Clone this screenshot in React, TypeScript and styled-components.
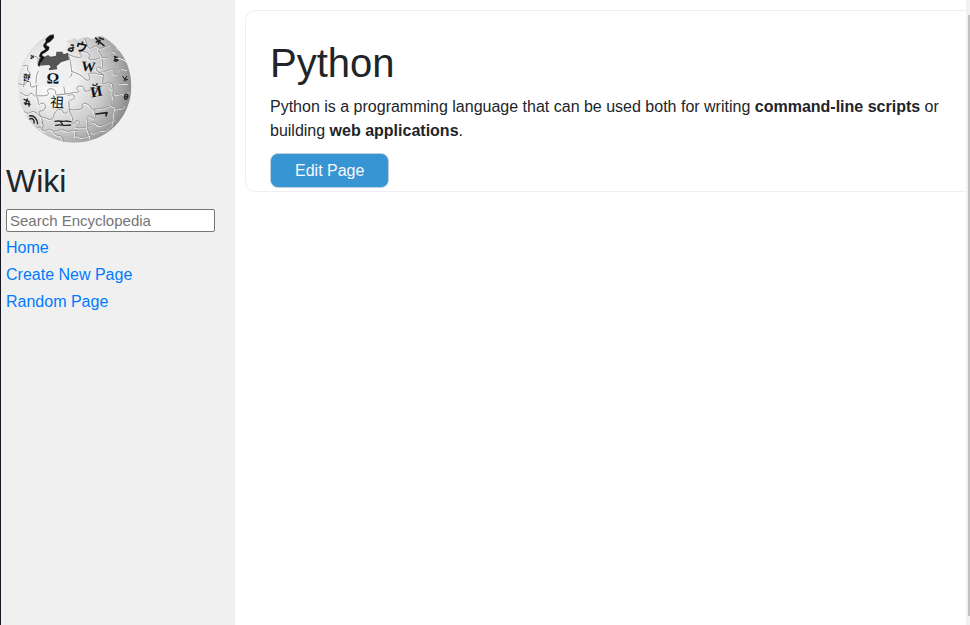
import React from 'react';
import styled, { createGlobalStyle } from 'styled-components';

const GlobalStyle = createGlobalStyle`
  *, *::before, *::after { box-sizing: border-box; }
  body {
    margin: 0;
    background: #fff;
    color: #212529;
    font: 16px/24px "Liberation Sans", Arial, sans-serif;
  }
`;

const Page = styled.div`
  display: grid;
  grid-template-columns: 235px minmax(0, 1fr) 4px;
  min-height: 100vh;
`;

const Sidebar = styled.aside`
  display: flex;
  flex-direction: column;
  align-items: flex-start;
  padding: 25px 5px;
  border-left: 1px solid #15161f;
  background: #f0f0f0;
`;

const Logo = styled.svg`
  display: block;
  width: 130px;
  height: 125px;
  margin-left: 4px;
`;

const SiteTitle = styled.h2`
  margin: 12px 0 8px;
  font-size: 32px;
  line-height: 38px;
  font-weight: 400;
`;

const SearchForm = styled.form`
  margin: 1px 0 4px;
`;

const SearchInput = styled.input`
  display: block;
  width: 209px;
  height: 23px;
  padding: 1px 3px;
  border: 1px solid #767676;
  border-radius: 2px;
  background: #fff;
  font: 15px "Liberation Sans", Arial, sans-serif;
  &::placeholder { color: #757575; }
`;

const Nav = styled.nav`
  display: flex;
  flex-direction: column;
  gap: 3px;
`;

const NavLink = styled.a`
  color: #007bff;
  text-decoration: none;
`;

const Main = styled.main`
  padding: 10px 0 0 10px;
`;

const Card = styled.article`
  padding: 28px 24px 3px;
  border: 1px solid #efefef;
  border-right: 0;
  border-radius: 10px 0 0 10px;
`;

const Title = styled.h1`
  margin: 0 0 8px;
  font-size: 40px;
  line-height: 48px;
  font-weight: 400;
`;

const Text = styled.p`
  margin: 0 0 10px;
`;

const EditButton = styled.button`
  display: block;
  height: 35px;
  padding: 0 24px;
  border: 1px solid #bdd0df;
  border-radius: 8px;
  background: #3895d3;
  color: #f8f9fa;
  font: 16px/24px "Liberation Sans", Arial, sans-serif;
`;

const ScrollTrack = styled.div`
  padding: 15px 0 9px 2px;
  display: flex;
  background: #f1f1f1;
`;

const ScrollThumb = styled.div`
  flex: 1;
  background: #c1c1c1;
`;

const seams = [
  'M62 95 C75 92 86 95 84 106 C80 120 97 125 87 136 C77 148 80 160 78 174',
  'M38 122 C49 124 55 117 53 128 C48 140 63 139 60 151 C58 162 47 158 43 170 L40 185',
  'M27 176 C37 181 45 181 49 173 C54 164 64 171 61 181 C59 188 70 187 82 182',
  'M82 181 C94 177 105 184 108 176 C110 164 127 168 121 179 C117 187 130 184 154 181 C165 181 164 174 160 167 C149 154 166 144 170 152 C179 164 188 151 185 139 C183 118 178 98 175 88',
  'M175 88 C196 98 216 102 214 92 C201 82 216 76 230 82 C246 88 232 99 238 103 C249 108 263 100 276 97',
  'M222 40 C236 57 225 64 241 71 C252 63 263 61 267 70 C260 81 275 86 276 98 C275 111 281 126 274 131 C263 120 253 132 263 140 C276 147 281 143 279 159 L276 177',
  'M185 139 C201 146 218 151 225 164 C241 170 240 158 236 151 C232 145 245 141 263 147 L279 149',
  'M267 70 C281 71 287 64 299 61 C312 59 304 50 315 53 C325 56 318 65 326 73',
  'M277 97 C293 101 302 93 302 83 C311 74 322 83 317 92 C323 99 341 98 351 108',
  'M279 141 C296 135 310 129 313 137 C302 147 314 154 325 146 C333 137 327 130 341 132 L351 134',
  'M154 181 C166 184 161 192 165 205 C176 218 187 202 192 213 C196 226 182 222 176 230 L178 255',
  'M165 207 C184 206 189 202 200 202 C210 202 206 195 199 191 C203 179 223 182 222 191 C217 202 235 200 247 192 C262 191 277 187 279 177',
  'M279 177 C292 174 305 169 307 181 C295 187 302 198 314 192 C324 184 321 174 333 175 L354 176',
  'M307 178 C313 194 305 208 310 219 C318 233 303 225 302 237 C304 249 315 238 317 254 C310 272 316 282 308 302',
  'M178 254 C196 256 209 255 217 249 C211 235 225 231 236 240 C247 247 237 253 252 253 C275 251 294 247 309 240',
  'M31 203 C41 207 47 217 57 209 C65 197 72 215 79 218 C90 225 80 235 88 239 C98 228 110 239 105 250 C98 263 85 254 87 264 C93 276 96 281 98 294',
  'M79 181 C81 195 75 209 80 218',
  'M80 213 C96 211 112 216 116 205 C106 194 119 188 130 193 C143 198 132 207 140 210 L165 207',
  'M43 260 C54 270 60 262 66 260 C80 257 84 275 95 276 C112 278 118 288 126 281 C134 273 129 270 134 264 C143 249 159 252 159 263 C169 269 179 255 178 254',
  'M178 254 C180 270 188 273 188 285 C178 295 190 301 198 288 C211 284 211 298 201 304 C194 311 199 323 196 336',
  'M77 312 C83 301 93 307 96 313 C105 323 115 311 122 314 C136 326 148 310 160 315 C178 323 187 315 201 316',
  'M95 291 L100 302 L94 314 M130 322 C137 337 150 325 158 339 L160 350',
  'M198 308 C215 311 225 307 239 303 C240 291 255 289 263 301 C276 305 290 296 317 284',
  'M253 253 C249 262 260 270 254 279 C241 283 246 272 235 274 C224 282 237 290 232 301 C229 316 240 321 241 340',
  'M317 254 C333 247 342 254 348 242 M315 207 C326 213 335 201 344 209 L361 200',
  'M246 324 C257 330 268 313 281 317 C292 320 298 310 303 304 M196 334 C208 328 213 343 221 337 L244 330',
];

const glyphs = [
  { char: 'W', x: 234, y: 139, size: 42, turn: 6, weight: 700 },
  { char: 'Ω', x: 128, y: 176, size: 47, turn: 1, weight: 700 },
  { char: 'Й', x: 262, y: 214, size: 45, turn: -11, weight: 700 },
  { char: '祖', x: 141, y: 247, size: 42, turn: 3, weight: 400 },
  { char: 'ウ', x: 212, y: 79, size: 36, turn: 12, weight: 700 },
  { char: '한', x: 48, y: 167, size: 25, turn: 10, weight: 700 },
];

function Globe() {
  return (
    <Logo viewBox="0 0 390 375" role="img" aria-label="Puzzle globe">
      <defs>
        <radialGradient id="sphere" cx="125" cy="160" r="265" gradientUnits="userSpaceOnUse">
          <stop offset="0" stopColor="#fff" />
          <stop offset=".3" stopColor="#eee" />
          <stop offset=".58" stopColor="#cecece" />
          <stop offset=".82" stopColor="#a1a1a1" />
          <stop offset="1" stopColor="#727272" />
        </radialGradient>
        <clipPath id="ball">
          <path d="M122 29 C73 50 25 109 25 188 C25 280 101 353 195 353 C289 353 364 278 364 184 C364 117 330 65 280 35 L269 33 L259 36 L247 43 L234 37 L219 38 L200 45 L194 38 L181 44 L168 48 L177 60 L166 72 L175 88 L178 116 L155 118 L142 134 L119 132 L117 121 L88 124 L94 95 L111 73 L107 55 L130 42 Z M88 124 L178 106 L178 185 L82 185 Z" />
        </clipPath>
      </defs>
      <g clipPath="url(#ball)">
        <rect width="390" height="375" fill="url(#sphere)" />
        <g fill="none" strokeLinecap="round" strokeLinejoin="round">
          {seams.map((d) => (
            <g key={d}>
              <path d={d} stroke="#fff" strokeWidth="3" transform="translate(-2 2)" />
              <path d={d} stroke="#949494" strokeWidth="3" />
            </g>
          ))}
        </g>
      </g>
      <path d="M88 98 L98 98 L114 90 L122 95 L138 92 L139 80 L157 80 L161 88 L174 83 L177 104 L153 112 L147 118 L140 124 L142 133 L118 136 L116 131 L122 126 L117 120 L87 122 Z" fill="#555" />
      <path d="M121 30 C76 51 26 107 25 185" fill="none" stroke="#d4d4d4" strokeWidth="2" />
      <path d="M108 42 L119 32 L130 29 L131 38 L120 50 L112 53 L107 61 L117 66 L116 74 L104 83 L96 86 L96 93 L103 96 L97 106 L90 113 L87 124 L84 120 L88 107 L94 99 L88 94 L93 82 L108 73 L102 66 L101 59 L108 51 Z" fill="#111" stroke="#111" strokeWidth="2" strokeLinejoin="round" />
      <g fill="#111" fontFamily='"Liberation Serif", "Noto Sans CJK SC", serif' textAnchor="middle">
        {glyphs.map((g) => (
          <text key={g.char} x={g.x} y={g.y} fontSize={g.size} fontWeight={g.weight} transform={`rotate(${g.turn} ${g.x} ${g.y})`}>{g.char}</text>
        ))}
      </g>
      <g fill="none" stroke="#222" strokeLinecap="round" strokeLinejoin="round">
        <path strokeWidth="5" d="M191 68 L179 70 L175 75 L184 79 L189 76 L187 68 M184 60 L190 61" />
        <path strokeWidth="5" d="M257 39 L267 50 L282 62 M259 51 L270 46 L265 57 M268 39 L280 43" />
        <path strokeWidth="5" d="M258 267 L291 263 L288 272" />
        <path strokeWidth="4" d="M135 289 C146 286 158 291 166 288 L182 290 M137 301 C151 297 163 304 182 300 M151 290 L160 301" />
        <path strokeWidth="4" d="M59 273 C71 269 82 283 83 296 M59 282 C67 277 75 287 72 294" />
        <path strokeWidth="4" d="M42 223 L56 229 M52 222 L46 239 M57 229 L57 244 M43 234 L60 238" />
        <path strokeWidth="3" d="M338 154 L349 168 M342 168 L350 154 M342 160 L353 164 M63 91 L72 97 L62 101 L69 92" />
        <path strokeWidth="4" d="M344 211 C352 204 357 211 351 220 C345 228 342 217 344 211 M346 216 L354 213" />
        <path strokeWidth="4" d="M313 94 L322 97 M316 96 L314 103 L324 105 L319 109 L312 107" />
      </g>
    </Logo>
  );
}

export default function App() {
  return (
    <>
      <GlobalStyle />
      <Page>
        <Sidebar>
          <Globe />
          <SiteTitle>Wiki</SiteTitle>
          <SearchForm role="search">
            <SearchInput type="text" aria-label="Search Encyclopedia" placeholder="Search Encyclopedia" />
          </SearchForm>
          <Nav>
            <NavLink href="#home">Home</NavLink>
            <NavLink href="#create">Create New Page</NavLink>
            <NavLink href="#random">Random Page</NavLink>
          </Nav>
        </Sidebar>
        <Main>
          <Card>
            <Title>Python</Title>
            <Text>
              Python is a programming language that can be used both for writing{' '}
              <strong>command-line scripts</strong> or building <strong>web applications</strong>.
            </Text>
            <EditButton type="button">Edit Page</EditButton>
          </Card>
        </Main>
        <ScrollTrack aria-hidden="true">
          <ScrollThumb />
        </ScrollTrack>
      </Page>
    </>
  );
}
